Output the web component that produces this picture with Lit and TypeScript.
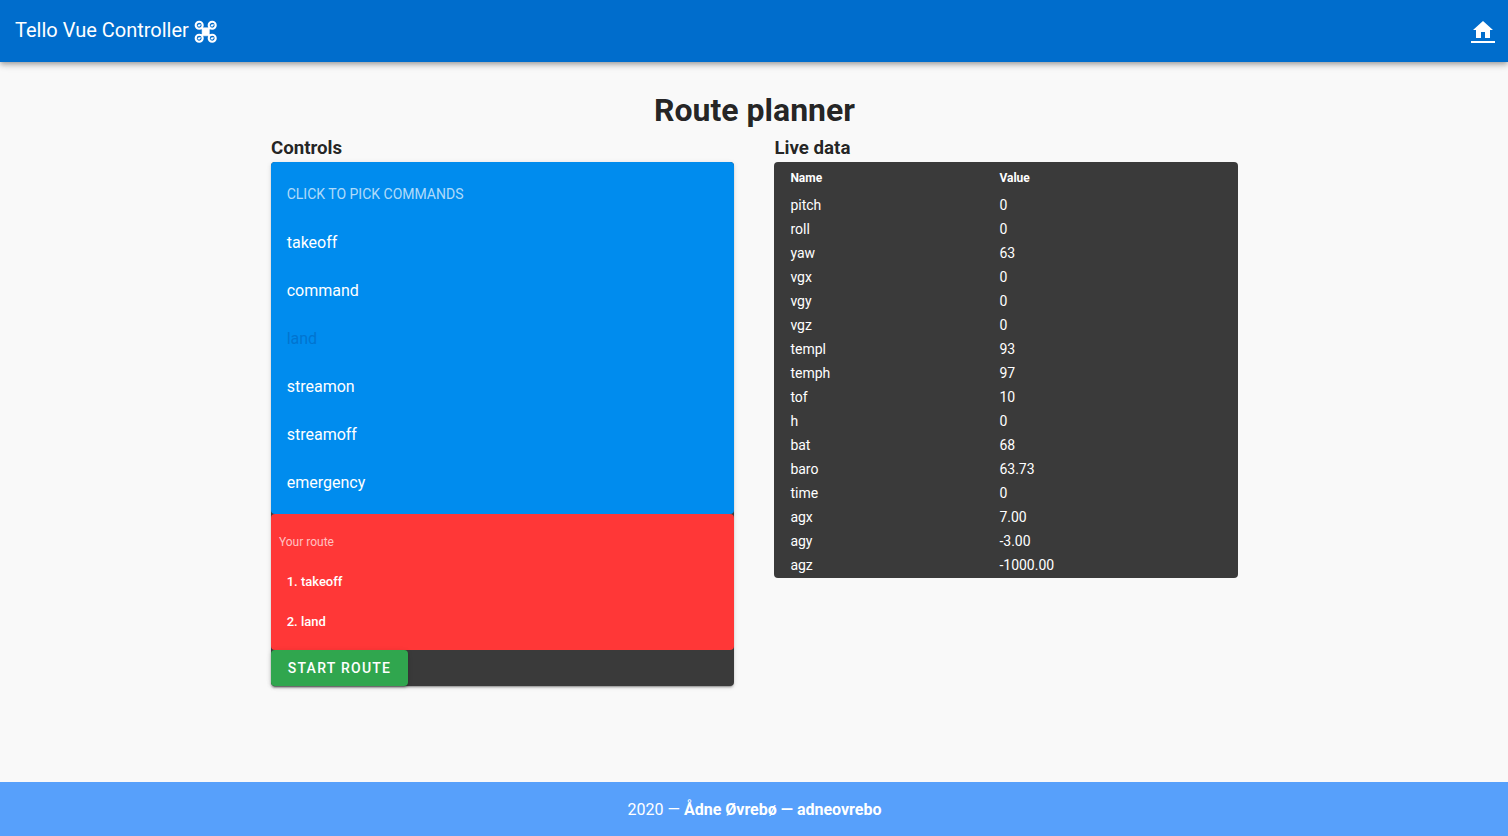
import { LitElement, html, css } from "lit";
import { customElement } from "lit/decorators.js";

const COMMANDS = ["takeoff", "command", "land", "streamon", "streamoff", "emergency"];
const ROUTE = ["takeoff", "land"];
const LIVE: [string, string][] = [
  ["pitch", "0"], ["roll", "0"], ["yaw", "63"], ["vgx", "0"], ["vgy", "0"], ["vgz", "0"],
  ["templ", "93"], ["temph", "97"], ["tof", "10"], ["h", "0"], ["bat", "68"], ["baro", "63.73"],
  ["time", "0"], ["agx", "7.00"], ["agy", "-3.00"], ["agz", "-1000.00"],
];

@customElement("app-root")
export class AppRoot extends LitElement {
  static styles = css`
    :host {
      display: flex;
      flex-direction: column;
      height: 100vh;
      background: #f9f9f9;
      color: rgba(0, 0, 0, 0.87);
      font-family: Roboto, sans-serif;
      font-size: 16px;
      line-height: 24px;
      overflow: hidden;
    }
    * { box-sizing: border-box; }
    h1, h3 { margin: 0; }
    .bar {
      flex: none;
      height: 62px;
      padding: 0 13.5px 0 15px;
      display: flex;
      align-items: center;
      justify-content: space-between;
      background: #006dcc;
      color: #fff;
      box-shadow: 0 2px 4px -1px rgba(0, 0, 0, 0.2), 0 4px 5px rgba(0, 0, 0, 0.14), 0 1px 10px rgba(0, 0, 0, 0.12);
    }
    .brand { display: flex; align-items: center; font-size: 20px; line-height: 30px; gap: 5px; padding-bottom: 3px; }
    .brand svg { margin-top: 4px; }
    .home { display: block; height: 25px; width: 24px; border-bottom: 2px solid #fff; margin-bottom: 1px; }
    svg { display: block; fill: currentColor; }
    main { flex: 1; display: flex; flex-direction: column; align-items: center; padding-top: 24px; }
    h1 { font-size: 32px; line-height: 48px; font-weight: 700; padding-left: 1px; }
    .cols { display: grid; grid-template-columns: 1fr 1fr; gap: 40px; width: 967px; align-items: start; }
    h3 { font-size: 18.72px; line-height: 28px; font-weight: 700; padding-left: 0.4px; }
    .card { background: #3a3a3a; color: #fff; border-radius: 4px; }
    .raised { box-shadow: 0 3px 1px -2px rgba(0, 0, 0, 0.2), 0 2px 2px rgba(0, 0, 0, 0.14), 0 1px 5px rgba(0, 0, 0, 0.12); }
    .picker { background: #008cee; border-radius: 4px; padding: 8px 0; }
    .sub { height: 48px; padding: 0 16.2px; display: flex; align-items: center; font-size: 14px; color: rgba(255, 255, 255, 0.7); }
    .item { height: 48px; padding: 2px 16.2px 0; display: flex; align-items: center; }
    .picked { color: #0074d0; }
    .route { background: #ff3737; border-radius: 4px; padding: 8px 0; }
    .route-sub { height: 40px; padding: 0 8.4px; display: flex; align-items: center; font-size: 12px; color: rgba(255, 255, 255, 0.7); }
    .step { height: 40px; padding: 0 16.2px; display: flex; align-items: center; font-size: 13px; font-weight: 500; }
    button {
      display: block;
      height: 36px;
      width: 137px;
      padding: 1px 0 0 1px;
      border: 0;
      border-radius: 4px;
      background: #30a64e;
      color: #fff;
      font: 500 14px/35px Roboto, sans-serif;
      letter-spacing: 1.25px;
    }
    .table { overflow: hidden; font-size: 14px; }
    .row { display: grid; grid-template-columns: 209px 1fr; height: 24px; line-height: 22px; padding: 0 16.4px; }
    .head { height: 32px; line-height: 32px; font-size: 12px; font-weight: 700; }
    footer { flex: none; height: 54px; padding: 2px 0 0 1px; display: flex; align-items: center; justify-content: center; background: #57a0fb; color: #fff; white-space: pre; }
  `;

  render() {
    return html`
      <header class="bar">
        <div class="brand">
          <span>Tello Vue Controller</span>
          <svg width="24" height="24" viewBox="0.3 0.2 24 24">
            <path d="M7.4 8.6 8.6 7.4 9.6 8H14.4L15.4 7.4 16.6 8.6 15.6 10V14L16.6 15.4 15.4 16.6 14.4 16H9.6L8.6 16.6 7.4 15.4 8.4 14V10Z" stroke="currentColor" stroke-width="0.6" />
            <g fill="none" stroke="currentColor" stroke-width="2.1">
              <circle cx="5.5" cy="5.5" r="3.5" /><circle cx="18.5" cy="5.5" r="3.5" />
              <circle cx="5.5" cy="18.5" r="3.5" /><circle cx="18.5" cy="18.5" r="3.5" />
            </g>
            <path d="M3.5 6.4 5 4.4 7.5 4.6 6 6.6ZM16.5 6.4 18 4.4 20.5 4.6 19 6.6ZM3.5 19.4 5 17.4 7.5 17.6 6 19.6ZM16.5 19.4 18 17.4 20.5 17.6 19 19.6Z" />
          </svg>
        </div>
        <a class="home">
          <svg width="24" height="24" viewBox="0 0 24 24"><path d="M10,20V14H14V20H19V12H22L12,3L2,12H5V20H10Z" /></svg>
        </a>
      </header>
      <main>
        <h1>Route planner</h1>
        <div class="cols">
          <section>
            <h3>Controls</h3>
            <div class="card raised">
              <div class="picker">
                <div class="sub">CLICK TO PICK COMMANDS</div>
                ${COMMANDS.map((c) => html`<div class="item ${c === "land" ? "picked" : ""}">${c}</div>`)}
              </div>
              <div class="route">
                <div class="route-sub">Your route</div>
                ${ROUTE.map((c, i) => html`<div class="step">${i + 1}. ${c}</div>`)}
              </div>
              <button class="raised">START ROUTE</button>
            </div>
          </section>
          <section>
            <h3>Live data</h3>
            <div class="card table">
              <div class="row head"><span>Name</span><span>Value</span></div>
              ${LIVE.map(([n, v]) => html`<div class="row"><span>${n}</span><span>${v}</span></div>`)}
            </div>
          </section>
        </div>
      </main>
      <footer><span>2020 — <b>Ådne Øvrebø — adneovrebo</b></span></footer>
    `;
  }
}
